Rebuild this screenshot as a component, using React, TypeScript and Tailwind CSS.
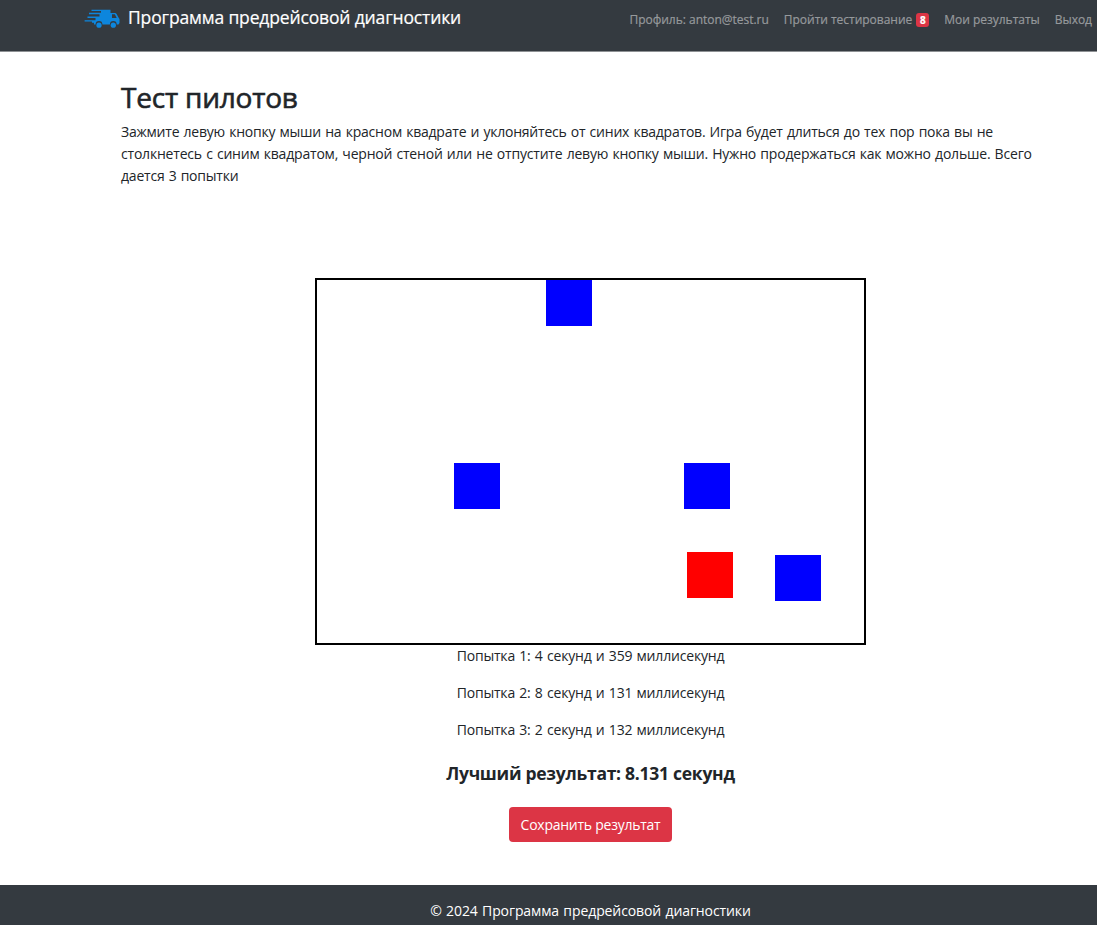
import React from "react";

const ENEMIES = [
  { x: 229, y: 0 },
  { x: 137, y: 183 },
  { x: 367, y: 183 },
  { x: 458, y: 275 },
];

const ATTEMPTS = [
  "Попытка 1: 4 секунд и 359 миллисекунд",
  "Попытка 2: 8 секунд и 131 миллисекунд",
  "Попытка 3: 2 секунд и 132 миллисекунд",
];

function Truck() {
  return (
    <svg width="36" height="20" viewBox="0 0 36 20" fill="#0d86dd" className="shrink-0">
      <path d="M7.500 .8H26.500V4H31Q32 4 32.600 5L34.500 8.500L35.500 10V14L34.500 15.500H32.700A3.400 3.400 0 0 0 25.900 15.500H18.400A3.400 3.400 0 0 0 11.600 15.500H10V13.800H8V12.600H.6V11.300H11.500V9H3.500V7.500H15.500V5.200H5V3.800H17V2.100H7.500Z" />
      <path d="M28 5.300H30.800L32.700 9H28Z" fill="#343a40" />
      <circle cx="15" cy="16.200" r="2.600" />
      <circle cx="29.300" cy="16.200" r="2.600" />
    </svg>
  );
}

export default function App() {
  return (
    <div className="flex h-[925px] w-[1097px] flex-col overflow-hidden bg-white font-['Open_Sans','Noto_Sans',sans-serif] text-[14px] leading-[22px] text-[#212529]">
      <header className="flex h-[52px] shrink-0 items-start justify-between border-b border-[#8e9194] bg-[#343a40] pr-[5px] pl-[84px]">
        <a className="flex pt-[9px] text-white">
          <Truck />
          <span className="-mt-[4px] ml-[8px] text-[17.500px] leading-6 tracking-[-0.15px] whitespace-nowrap [-webkit-text-stroke:0.2px]">Программа предрейсовой диагностики</span>
        </a>
        <nav className="flex gap-[15px] pt-[9px] text-[12px] tracking-[-0.02px] whitespace-nowrap text-[#96999c] [-webkit-text-stroke:0.2px]">
          <a>Профиль: anton@test.ru</a>
          <a className="flex items-center">
            <span>Пройти тестирование</span>
            <span className="ml-[4px] flex h-[14px] w-[13px] items-center justify-center rounded-[3px] bg-[#dc3545] text-[10px] font-bold text-white">8</span>
          </a>
          <a>Мои результаты</a>
          <a>Выход</a>
        </nav>
      </header>

      <main className="flex h-[833px] shrink-0 flex-col">
        <div className="pt-[27px] pl-[121px] whitespace-nowrap">
          <h1 className="text-[28px] leading-[36px] tracking-[-0.2px] [-webkit-text-stroke:0.6px]">Тест пилотов</h1>
          <p className="mt-[6px] tracking-[-0.22px] [word-spacing:0.8px]">
            <span className="block">Зажмите левую кнопку мыши на красном квадрате и уклоняйтесь от синих квадратов. Игра будет длиться до тех пор пока вы не</span>
            <span className="block tracking-[-0.2px]">столкнетесь с синим квадратом, черной стеной или не отпустите левую кнопку мыши. Нужно продержаться как можно дольше. Всего</span>
            <span className="block">дается 3 попытки</span>
          </p>
        </div>

        <div className="relative mt-[91px] ml-[315px] h-[367px] w-[551px] shrink-0 border-2 border-black">
          {ENEMIES.map((e) => (
            <div key={e.x} className="absolute size-[46px] bg-[#0000ff]" style={{ left: e.x, top: e.y }} />
          ))}
          <div className="absolute top-[272px] left-[370px] size-[46px] bg-[#ff0000]" />
        </div>

        <div className="ml-[84px] flex w-[1013px] flex-col items-center whitespace-nowrap">
          {ATTEMPTS.map((a) => (
            <p key={a} className="mb-[15px] tracking-[-0.18px] [word-spacing:0.8px]">{a}</p>
          ))}
          <p className="mt-[4px] text-[17.500px] leading-[26px] font-bold tracking-[-0.27px]">Лучший результат: 8.131 секунд</p>
          <button className="mt-[21px] h-[35px] w-[163px] rounded-[4px] bg-[#dc3545] tracking-[-0.25px] text-white">Сохранить результат</button>
        </div>
      </main>

      <footer className="flex h-[40px] shrink-0 justify-center bg-[#343a40] pt-[15px] pl-[84px] text-white">
        <span className="tracking-[-0.1px] whitespace-nowrap [word-spacing:0.8px]">© 2024 Программа предрейсовой диагностики</span>
      </footer>
    </div>
  );
}
